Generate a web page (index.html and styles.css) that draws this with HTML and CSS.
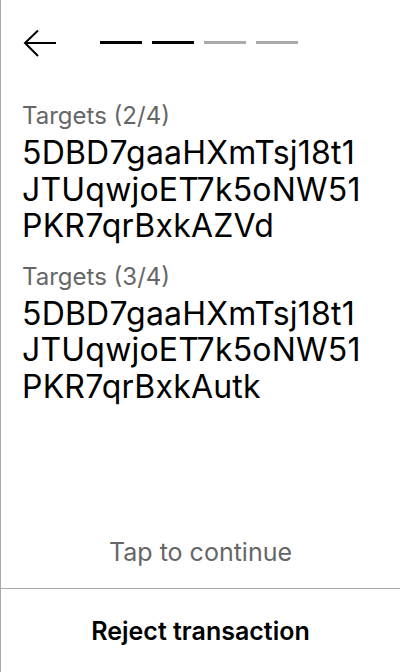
FILE: index.html
```html
<!DOCTYPE html>
<html lang="en">
<head>
<meta charset="utf-8">
<link rel="stylesheet" href="styles.css">
</head>
<body>
<div class="screen">
  <header class="header">
    <svg class="back" width="34" height="28" viewBox="0 0 34 28" fill="none" stroke="#000" stroke-width="2">
      <path d="M33 14H2"/>
      <path d="M15 1.5L2 14L15 27"/>
    </svg>
    <div class="steps">
      <span class="step done"></span>
      <span class="step done"></span>
      <span class="step"></span>
      <span class="step"></span>
    </div>
  </header>
  <main class="content">
    <section class="group">
      <div class="label">Targets (2/4)</div>
      <div class="address">5DBD7gaaHXmTsj18t1<br>JTUqwjoET7k5oNW51<br>PKR7qrBxkAZVd</div>
    </section>
    <section class="group">
      <div class="label">Targets (3/4)</div>
      <div class="address">5DBD7gaaHXmTsj18t1<br>JTUqwjoET7k5oNW51<br>PKR7qrBxkAutk</div>
    </section>
  </main>
  <div class="tap">Tap to continue</div>
  <div class="reject">Reject transaction</div>
</div>
</body>
</html>
```

FILE: styles.css
```css
* { box-sizing: border-box; }
html, body {
  margin: 0;
  padding: 0;
  background: #fff;
}
body {
  font-family: Inter, "Noto Sans", sans-serif;
  color: #000;
}
.screen {
  width: 400px;
  height: 672px;
  border-left: 1px solid #a8a8a8;
  display: flex;
  flex-direction: column;
}
.header {
  height: 84px;
  display: flex;
  align-items: center;
  padding-left: 22px;
  flex-shrink: 0;
}
.back {
  display: block;
  margin-top: 2px;
}
.steps {
  display: flex;
  gap: 10px;
  margin-left: 43px;
}
.step {
  display: block;
  width: 42px;
  height: 3px;
  background: #aaaaaa;
}
.step.done {
  background: #000;
}
.content {
  flex: 1;
  padding: 18px 0 0 21px;
  display: flex;
  flex-direction: column;
  gap: 18px;
}
.label {
  font-size: 24px;
  line-height: 28px;
  color: #666;
  margin-bottom: 5px;
}
.address {
  font-size: 32px;
  line-height: 36.5px;
  letter-spacing: 0.2px;
  color: #000;
}
.tap {
  height: 74px;
  padding-top: 2px;
  display: flex;
  align-items: center;
  justify-content: center;
  font-size: 25px;
  color: #666;
  flex-shrink: 0;
}
.reject {
  height: 84px;
  border-top: 1px solid #aaaaaa;
  display: flex;
  align-items: center;
  justify-content: center;
  font-size: 25px;
  font-weight: 600;
  color: #000;
  flex-shrink: 0;
}
```
